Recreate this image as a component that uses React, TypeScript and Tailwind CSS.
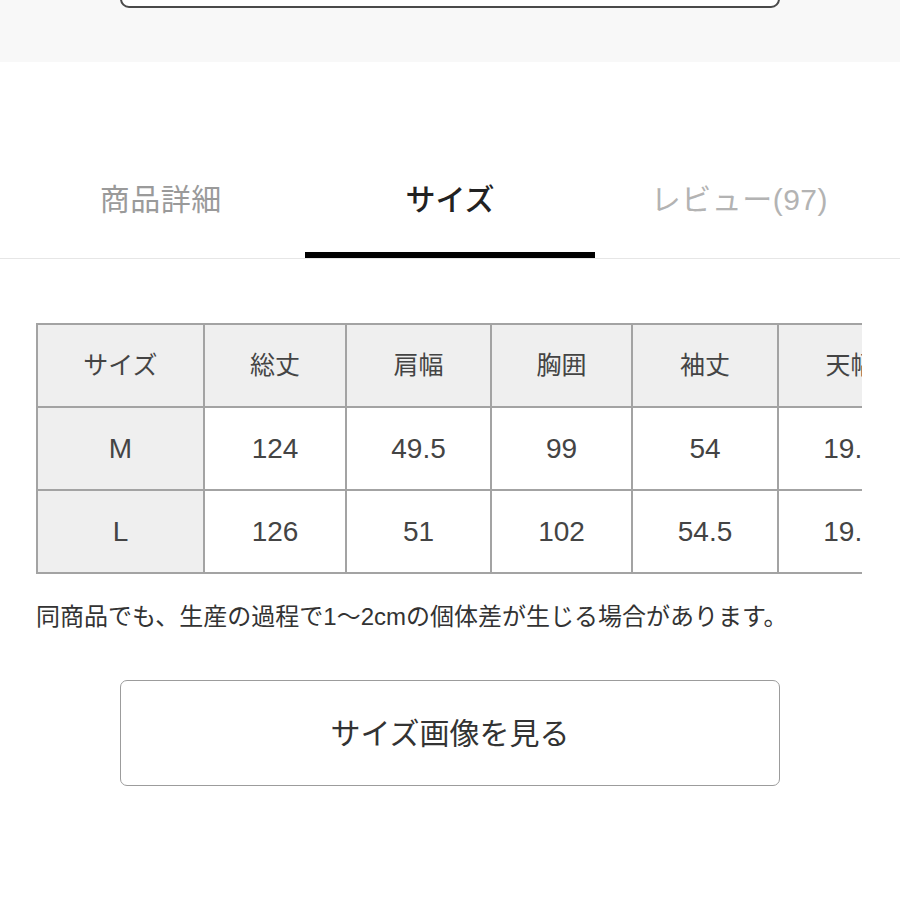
import React from "react";

const font = "font-['Liberation_Sans','Noto_Sans_CJK_JP',sans-serif]";

const tabs = [
  { label: "商品詳細", active: false, color: "text-[#9a9a9a]" },
  { label: "サイズ", active: true, color: "text-[#222]" },
  { label: "レビュー(97)", active: false, color: "text-[#b3b3b3]" },
];

const widths = ["w-[167px]", "w-[142px]", "w-[145px]", "w-[141px]", "w-[146px]", "w-[145px]"];
const head = ["サイズ", "総丈", "肩幅", "胸囲", "袖丈", "天幅"];
const rows = [
  ["M", "124", "49.5", "99", "54", "19.5"],
  ["L", "126", "51", "102", "54.5", "19.5"],
];

export default function App() {
  return (
    <div className={`w-[900px] h-[900px] bg-white overflow-hidden ${font}`}>
      <div className="h-[62px] bg-[#f8f8f8] px-[120px] overflow-hidden">
        <div className="-mt-[52px] h-[60px] rounded-[9px] border-2 border-[#4a4a4a] bg-white" />
      </div>

      <div className="grid grid-cols-3 border-b border-[#e6e6e6] pt-[121px] px-[16px]">
        {tabs.map((t) => (
          <div key={t.label} className="flex flex-col items-center">
            <span className={`text-[30px] leading-[34px] ${t.color} ${t.active ? "font-medium" : "tracking-[0.5px]"}`}>
              {t.label}
            </span>
            <div className={`mt-[35px] h-[6px] w-full ${t.active ? "bg-black" : "bg-transparent"}`} />
          </div>
        ))}
      </div>

      <div className="ml-[36px] mt-[64px] w-[826px] overflow-hidden">
        <table className="table-fixed border-collapse w-[886px] text-[#444]">
          <thead>
            <tr className="bg-[#efefef] h-[83px]">
              {head.map((h, i) => (
                <th key={h} className={`${widths[i]} border-2 border-[#a3a3a3] text-[25px] font-normal text-center`}>
                  {h}
                </th>
              ))}
            </tr>
          </thead>
          <tbody>
            {rows.map((r) => (
              <tr key={r[0]} className="h-[83px]">
                {r.map((c, i) => (
                  <td
                    key={i}
                    className={`border-2 border-[#a3a3a3] text-center text-[28px] ${i === 0 ? "bg-[#efefef]" : "bg-white"}`}
                  >
                    {c}
                  </td>
                ))}
              </tr>
            ))}
          </tbody>
        </table>
      </div>

      <p className="ml-[36px] mt-[28px] text-[24px] leading-[30px] text-[#333]">
        同商品でも、生産の過程で1〜2cmの個体差が生じる場合があります。
      </p>

      <div className="px-[120px] mt-[48px]">
        <button className="w-full h-[106px] rounded-[7px] border-[1.5px] border-[#9c9c9c] bg-white text-[30px] text-[#333]">
          サイズ画像を見る
        </button>
      </div>
    </div>
  );
}
